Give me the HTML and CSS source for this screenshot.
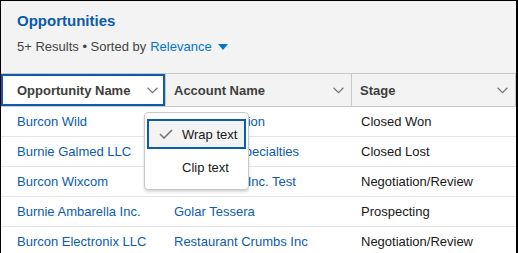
FILE: index.html
```html
<!DOCTYPE html>
<html lang="en">
<head>
    <meta charset="UTF-8" />
    <title>Opportunities</title>
    <link rel="stylesheet" href="styles.css">
</head>
<body>
<main class="card">
    <header class="card-header">
        <h1 class="title">Opportunities</h1>
        <p class="meta">5+ Results &bull; Sorted by <span class="sort">Relevance</span><svg class="caret" width="10" height="6" viewBox="0 0 10 6"><path d="M0 0H10L5 6Z" fill="#0176d3"/></svg></p>
    </header>

    <section class="grid">
        <div class="row head">
            <div class="th focused">Opportunity Name<svg class="chev" width="11" height="7" viewBox="0 0 11 7"><path d="M0.6 0.8L5.5 5.6L10.4 0.8" fill="none" stroke="#747474" stroke-width="1.2"/></svg></div>
            <div class="th">Account Name<svg class="chev" width="11" height="7" viewBox="0 0 11 7"><path d="M0.6 0.8L5.5 5.6L10.4 0.8" fill="none" stroke="#747474" stroke-width="1.2"/></svg></div>
            <div class="th">Stage<svg class="chev" width="11" height="7" viewBox="0 0 11 7"><path d="M0.6 0.8L5.5 5.6L10.4 0.8" fill="none" stroke="#747474" stroke-width="1.2"/></svg></div>
        </div>
        <div class="row">
            <div class="td link">Burcon Wild</div>
            <div class="td link">Burcon Fashion</div>
            <div class="td">Closed Won</div>
        </div>
        <div class="row">
            <div class="td link">Burnie Galmed LLC</div>
            <div class="td link">Ambarella Specialties</div>
            <div class="td">Closed Lost</div>
        </div>
        <div class="row">
            <div class="td link">Burcon Wixcom</div>
            <div class="td link">Burcon Wild Inc. Test</div>
            <div class="td">Negotiation/Review</div>
        </div>
        <div class="row">
            <div class="td link">Burnie Ambarella Inc.</div>
            <div class="td link">Golar Tessera</div>
            <div class="td">Prospecting</div>
        </div>
        <div class="row">
            <div class="td link">Burcon Electronix LLC</div>
            <div class="td link">Restaurant Crumbs Inc</div>
            <div class="td">Negotiation/Review</div>
        </div>
    </section>

    <ul class="menu">
        <li class="menu-item selected"><svg class="check" width="14" height="10" viewBox="0 0 14 10"><path d="M1 5L5 9L13 1" fill="none" stroke="#747474" stroke-width="1.6"/></svg>Wrap text</li>
        <li class="menu-item">Clip text</li>
    </ul>
</main>
</body>
</html>
```

FILE: styles.css
```css
* {
    box-sizing: border-box;
    font-family: 'Liberation Sans', Arial, sans-serif;
}
body {
    margin: 0;
    background: white;
    overflow: hidden;
}
.card {
    position: relative;
    width: 518px;
    height: 260px;
    border: 1px solid #000;
    border-right-width: 2px;
    background: white;
}
.card-header {
    background: #f3f3f3;
    padding: 10px 16px 17px;
}
.title {
    margin: 0;
    font-size: 15px;
    line-height: 20px;
    font-weight: bold;
    color: #0b5cab;
}
.meta {
    margin: 7px 0 0;
    font-size: 13px;
    line-height: 18px;
    color: #444;
    display: flex;
    align-items: center;
}
.sort {
    color: #0176d3;
    margin-left: 4px;
}
.caret {
    margin-left: 6px;
}
.grid {
    border-top: 1px solid #c9c9c9;
}
.row {
    display: grid;
    grid-template-columns: 165px 186px 164px;
    border-bottom: 1px solid #e5e5e5;
}
.row.head {
    border-bottom: 1px solid #c9c9c9;
}
.th {
    height: 32px;
    display: flex;
    align-items: center;
    justify-content: space-between;
    padding: 0 7px 0 8px;
    background: #f3f3f3;
    border-right: 1px solid #c9c9c9;
    font-size: 13px;
    font-weight: bold;
    color: #3e3e3c;
}
.th:first-child {
    padding-left: 16px;
}
.th.focused {
    background: white;
    box-shadow: inset 0 0 0 2px #0b5cab;
}
.td {
    height: 29px;
    display: flex;
    align-items: center;
    padding-left: 8px;
    font-size: 13px;
    color: #181818;
    white-space: nowrap;
}
.td:first-child {
    padding-left: 16px;
}
.td:last-child {
    padding-left: 9px;
}
.link {
    color: #0b5cab;
}
.menu {
    position: absolute;
    left: 143px;
    top: 111px;
    width: 105px;
    height: 78px;
    margin: 0;
    padding: 6px 2px 4px 2px;
    list-style: none;
    background: white;
    border: 1px solid #c9c9c9;
    border-radius: 4px;
    box-shadow: 0 2px 3px rgba(0, 0, 0, 0.16);
}
.menu-item {
    height: 36px;
    display: flex;
    align-items: center;
    padding-left: 35px;
    font-size: 13px;
    color: #181818;
}
.menu-item.selected {
    position: relative;
    height: 30px;
    background: #f3f3f3;
    border: 2px solid #0b5cab;
    padding-left: 33px;
}
.check {
    position: absolute;
    left: 10px;
    top: 8px;
}
```
